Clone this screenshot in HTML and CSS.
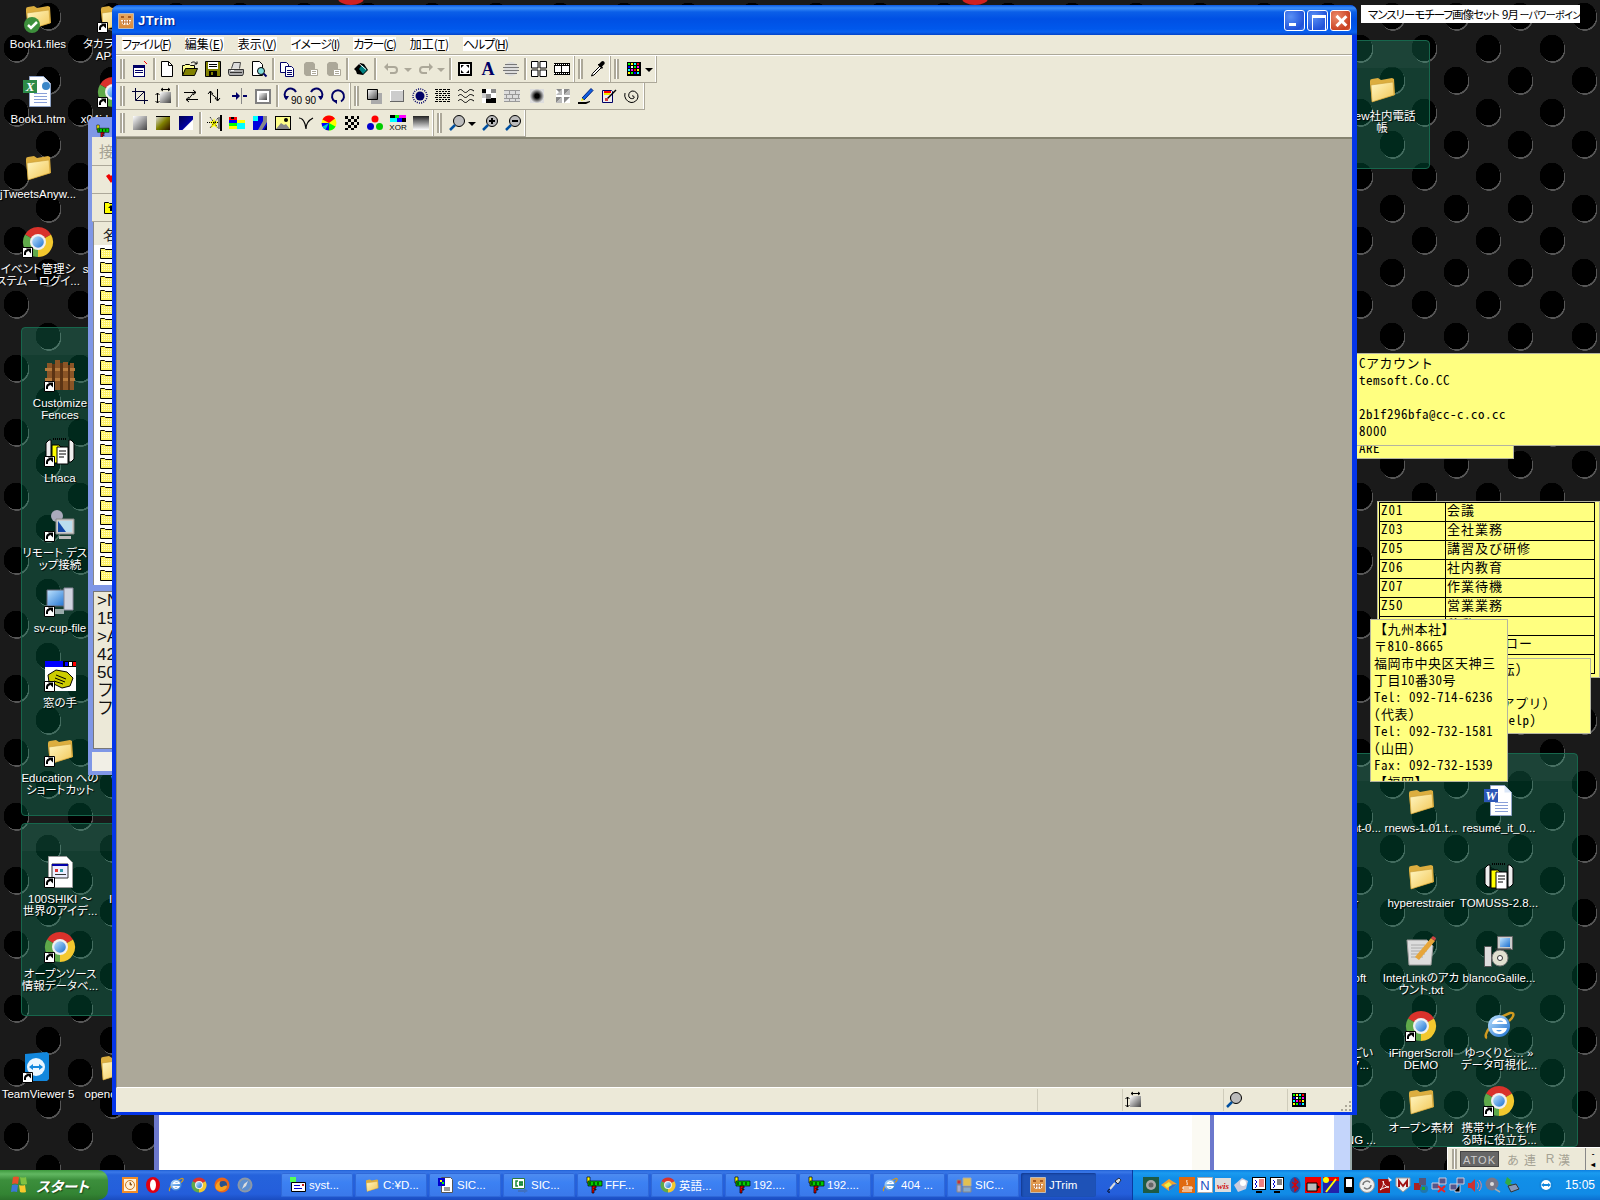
FILE: index.html
```html
<!DOCTYPE html>
<html lang="ja">
<head>
<meta charset="utf-8">
<title>JTrim</title>
<link rel="stylesheet" href="styles.css">
</head>
<body>
<svg class="defs" aria-hidden="true">
<defs>
<linearGradient id="gG" x1="0" y1="0" x2="1" y2="1"><stop offset="0" stop-color="#fff"/><stop offset="1" stop-color="#444"/></linearGradient>
<linearGradient id="gO" x1="0" y1="0" x2="1" y2="1"><stop offset="0" stop-color="#ddd"/><stop offset=".5" stop-color="#808000"/><stop offset="1" stop-color="#301000"/></linearGradient>
<linearGradient id="gN" x1="0" y1="0" x2="1" y2="1"><stop offset="0" stop-color="#000050"/><stop offset=".6" stop-color="#0000a0"/><stop offset=".65" stop-color="#fff"/></linearGradient>
<linearGradient id="gV" x1="0" y1="0" x2="0" y2="1"><stop offset="0" stop-color="#222"/><stop offset="1" stop-color="#fff"/></linearGradient>
<linearGradient id="gF" x1="0" y1="0" x2="1" y2="1"><stop offset="0" stop-color="#fff7c4"/><stop offset="1" stop-color="#f2c552"/></linearGradient>
<linearGradient id="gB" x1="0" y1="0" x2="1" y2="1"><stop offset="0" stop-color="#bfe4ff"/><stop offset="1" stop-color="#1b6fd0"/></linearGradient>
<linearGradient id="gS" x1="0" y1="0" x2="0" y2="1"><stop offset="0" stop-color="#e8a860"/><stop offset="1" stop-color="#d88838"/></linearGradient>
<radialGradient id="gD"><stop offset=".3" stop-color="#000"/><stop offset="1" stop-color="#ddd"/></radialGradient>

<g id="t-app"><path fill="#fff" d="M2 5h10v10H2z"/><path fill="#006" d="M1 4h12v3H1zM1 4h1v12H1zM12 4h1v12h-1zM1 15h12v1H1zM3 9h8v1H3zM3 11h8v1H3z"/><path fill="#f00" d="M12 0h1v1h1v1h1v1h-1V2h-1V1h-1z"/></g>
<g id="t-doc"><path fill="#fff" stroke="#000" d="M2.500.5h7l4 4v11h-11z"/><path fill="none" stroke="#000" d="M9.500.5v4h4"/></g>
<g id="t-open"><path fill="#ffff90" stroke="#000" d="M.5 14.500v-10h2l1-1h4l1 1h4v3h-8l-4 7z"/><path fill="#808000" stroke="#000" d="M.5 14.500l3-7h12l-3 7z"/><path fill="none" stroke="#000" d="M9 2c2-1.500 4-1.500 5.500 1M15 .5v2.500h-2.500"/></g>
<g id="t-save"><path fill="#808000" stroke="#000" d="M.5.5h15v15H.5z"/><path fill="#fff" d="M3 1h10v7H3z"/><path fill="#000" d="M4 3h8v1H4zM4 5h8v1H4zM4 10h8v5H4z"/><path fill="#808000" d="M6 11h2v3H6z"/></g>
<g id="t-print"><path fill="#ddd" stroke="#444" d="M3.500 7.500l2-6h7l-1 6"/><path fill="#aaa" stroke="#333" d="M.5 8.500h15v4l-1 2h-13l-1-2z"/><path fill="#333" d="M2 11h12v1H2z"/><path fill="#fff" d="M3 9h3v1H3z"/></g>
<g id="t-prev"><path fill="#fff" stroke="#000" d="M1.500.5h7l3 3v11h-10z"/><circle cx="10" cy="10" r="3.500" fill="#7fdcdc" stroke="#000"/><path stroke="#006" stroke-width="2" d="M12.500 12.500l3 3"/></g>
<g id="t-copy"><path fill="#fff" stroke="#006" d="M1.500 1.500h6l2 2v8h-8z"/><path fill="#fff" stroke="#006" d="M6.500 5.500h6l2 2v8h-8z"/><path stroke="#006" d="M8 9.500h5M8 11.500h5M8 13.500h5"/></g>
<g id="t-paste"><path fill="#aca899" d="M4 1h7l2 2v10l-2 2H4L2 13V3z"/><path fill="#fff" stroke="#aca899" d="M8.500 8.500h7v6h-7z"/><path stroke="#aca899" d="M10 10.500h4M10 12.500h4"/></g>
<g id="t-bucket"><path d="M1 8l6-6 4 1 4 6-5 5-6-1-1-3z"/><path fill="#008080" d="M9 4l5 5-4 4-4-5z"/><path stroke="#fff" d="M6 2.500l7 6"/></g>
<g id="t-undo"><path fill="none" stroke="#aca899" stroke-width="2" d="M3 6h8a3 3 0 0 1 0 6H7"/><path fill="#aca899" d="M5 2v8L1 6z"/></g>
<g id="t-redo"><path fill="none" stroke="#aca899" stroke-width="2" d="M13 6H5a3 3 0 0 0 0 6h4"/><path fill="#aca899" d="M11 2v8l4-4z"/></g>
<g id="t-fit"><path d="M1 1h14v14H1z"/><path fill="#fff" d="M3 3h10v10H3z"/><path d="M4 4h3L4 7zM12 4v3L9 4zM4 12V9l3 3zM12 12H9l3-3z"/></g>
<g id="t-a"><text x="8" y="14" text-anchor="middle" class="sv-serif" font-size="18" fill="#006">A</text></g>
<g id="t-emb"><circle cx="8" cy="8" r="7" fill="#ddd"/><path stroke="#777" d="M2 3.500h12M0 6.500h16M0 9.500h16M2 12.500h12"/></g>
<g id="t-grid"><path fill="#fff" stroke="#000" d="M.5.5h6.500v6.500H.5zM9 .5h6.500v6.500H9zM.5 9h6.500v6.500H.5zM9 9h6.500v6.500H9z"/></g>
<g id="t-film"><path d="M0 2h16v12H0z"/><path fill="#fff" d="M1 5h6v6H1zM8 5h7v6H8z"/><path stroke="#fff" stroke-dasharray="1 1" d="M0 3.500h16M0 12.500h16"/></g>
<g id="t-drop"><path fill="#fff" stroke="#000" d="M2.500 12.500l-1 2.500 2.500-1 7.500-7.500-1.500-1.500z"/><path d="M8 4l4 4 1-1.500-1-1 2.500-2.500a2 2 0 0 0-3-2.500L9 3 8 3z"/></g>
<g id="t-pal"><path d="M1 1h14v14H1z"/><path fill="#0f0" d="M2 2h2v2H2zM8 5h2v2H8zM5 11h2v2H5z"/><path fill="#ff0" d="M5 2h2v2H5zM11 8h2v2h-2zM2 11h2v2H2z"/><path fill="#0ff" d="M8 2h2v2H8zM2 8h2v2H2zM11 11h2v2h-2z"/><path fill="#00f" d="M2 5h2v2H2zM8 11h2v2H8z"/><path fill="#f0f" d="M11 5h2v2h-2zM5 8h2v2H5z"/><path fill="#f00" d="M11 2h2v2h-2zM8 8h2v2H8z"/><path fill="#fff" d="M5 5h2v2H5z"/></g>
<g id="t-crop"><path fill="none" stroke="#003" d="M3.500 0v12.500H16M0 3.500h12.500V16M4 12L12 4"/></g>
<g id="t-size"><path fill="url(#gG)" d="M5 4h11v11H5z"/><path fill="none" stroke="#000" d="M6 1.500h9M6 1.500l2-1.500M6 1.500l2 1.500M15 1.500l-2-1.500M15 1.500l-2 1.500M2.500 5v10M2.500 5l-2 2M2.500 5l2 2M2.500 15l-2-2M2.500 15l2-2"/></g>
<g id="t-swh"><path fill="none" stroke="#000" d="M1 4.500h12M10 2l3 2.500L10 7M15 11.500H3M6 9l-3 2.500L6 14M12 3L4 13"/></g>
<g id="t-swv"><path fill="none" stroke="#000" d="M4.500 15V3M2 6l2.500-3L7 6M11.500 1v12M9 10l2.500 3 2.500-3M3 4l10 8"/></g>
<g id="t-mir"><path fill="#006" d="M0 7h4V4l4 4-4 4V9H0zM11 7h4v2h-4z"/><path stroke="#888" d="M9.500 0v16"/></g>
<g id="t-frm"><path fill="#fff" stroke="#808080" stroke-width="2" d="M1 2h14v13H1z"/><path fill="url(#gG)" d="M4 5h8v7H4z"/></g>
<g id="t-r1"><path fill="none" stroke="#006" stroke-width="2" d="M2.500 11A6 6 0 1 1 12 4"/><path fill="#006" d="M0 8h5l-2.500 4z"/><text x="7" y="16" class="sv-sans" font-size="10" fill="#000">90</text></g>
<g id="t-r2"><path fill="none" stroke="#006" stroke-width="2" d="M13.500 11A6 6 0 1 0 4 4"/><path fill="#006" d="M16 8h-5l2.500 4z"/><text x="-2" y="16" class="sv-sans" font-size="10" fill="#000">90</text></g>
<g id="t-r3"><path fill="none" stroke="#006" stroke-width="2" d="M5 13.500a6 6 0 1 1 6 0"/><path fill="#006" d="M2 12h5v4z"/></g>
<g id="t-shd"><path fill="#aaa" d="M5 5h11v11H5z"/><path fill="url(#gG)" stroke="#000" d="M1.500 1.500h10v10h-10z"/></g>
<g id="t-btn"><path fill="#ccc" d="M1 2h14v12H1z"/><path fill="#fff" d="M1 2h14v1H2v11H1z"/><path fill="#666" d="M15 2v12H1v-1h13V2z"/></g>
<g id="t-sun"><circle cx="8" cy="8" r="4.500" fill="#006"/><circle cx="8" cy="8" r="7" fill="none" stroke="#006" stroke-width="1.500" stroke-dasharray="1 1.200"/></g>
<g id="t-mos"><path stroke="#000" stroke-dasharray="3 1" d="M0 1.500h16M0 5.500h16M0 9.500h16M0 13.500h16"/><path stroke="#000" stroke-dasharray="2 1" d="M1 3.500h15M1 7.500h15M1 11.500h15"/></g>
<g id="t-wav"><path fill="none" stroke="#000" d="M0 3c2-2 3-2 5 0s3 2 5 0 3-2 6 0M0 8c2-2 3-2 5 0s3 2 5 0 3-2 6 0M0 13c2-2 3-2 5 0s3 2 5 0 3-2 6 0"/></g>
<g id="t-chk"><path fill="#888" d="M1 1h14v14H1z"/><path d="M1 1h4v4H1zM10 10h5v5h-5zM5 11h5v4H5z"/><path fill="#fff" d="M5 1h5v5H5zM10 5h5v5h-5zM1 10h4v5H1z"/><path fill="#ccc" d="M1 5h4v5H1z"/></g>
<g id="t-brk"><path fill="#ddd" d="M0 2h16v12H0z"/><path stroke="#999" d="M0 2.500h16M0 6.500h16M0 10.500h16M0 13.500h16M5.500 3v3M11.500 3v3M2.500 7v3M8.500 7v3M14.500 7v3M5.500 11v2M11.500 11v2"/></g>
<g id="t-drk"><path fill="url(#gD)" d="M1 1h14v14H1z"/></g>
<g id="t-tile"><path fill="#fff" d="M1 1h14v14H1z"/><path fill="#888" d="M1 1h6v6zM9 1h6L9 7zM1 9h6l-6 6zM9 9h6l-6 6z"/><path fill="#bbb" d="M7 1v6H1zM15 1v6H9zM7 9v6H1z"/></g>
<g id="t-pen"><path fill="#1060e0" stroke="#002080" d="M4 10L13 .5l2 2L6 12z"/><path fill="#ee0" d="M4 10l2 2-3 1z"/><path fill="#000" d="M0 14h8l4-1v1l-4 2H0z"/></g>
<g id="t-cup"><path fill="#eee" stroke="#006" d="M1.500 2.500h9l1 1v11h-10z"/><path fill="#f00" d="M3 3h7v2H3z"/><path fill="#ee0" d="M3 5h6v2H3z"/><path fill="none" stroke="#000" stroke-width="1.500" d="M5 12L15 2"/><path fill="#c44" d="M4 10h3v3H4z"/></g>
<g id="t-spi"><path fill="none" stroke="#000" d="M8 8a1.500 1.500 0 0 1 2 2 3.500 3.500 0 0 1-5-1 4.500 4.500 0 0 1 3-6 5.500 5.500 0 0 1 6 6 6.500 6.500 0 0 1-7 5.500A7.500 7.500 0 0 1 1 5"/></g>
<g id="t-g1"><path fill="url(#gG)" d="M1 1h14v14H1z"/></g>
<g id="t-g2"><path fill="url(#gO)" d="M1 1h14v14H1z"/><path stroke="#000" d="M1 1.500h14"/></g>
<g id="t-g3"><path fill="url(#gN)" d="M1 1h14v14H1z"/></g>
<g id="t-spk"><path fill="#ff0" d="M8 3l1 3 4 1-3 2 1 4-3-2-3 2 1-4-3-2 4-1z"/><path stroke="#000" stroke-dasharray="1 1" d="M4 2l8 11M12 3L4 13M1 7.500h13"/><path fill="#888" d="M12 2h2v12h-2z"/><path d="M14 0h2v16h-2z"/></g>
<g id="t-bar"><path fill="#f00" d="M0 2h8v3H0z"/><path d="M2 2h3v2H2z"/><path fill="#00f" d="M0 5h8v3H0z"/><path fill="#0f0" d="M0 8h8v3H0z"/><path fill="#ff0" d="M8 5h8v3H8zM0 11h8v3H0z"/><path fill="#0ff" d="M8 8h8v3H8zM8 11h8v3H8z"/></g>
<g id="t-blu"><path fill="#00d" d="M1 1h14v14H1z"/><path fill="#0ff" d="M1 1h5v5H1z"/><path fill="#888" d="M11 1l4 0v6l-5 8h-4l5-9z"/><path fill="#003" d="M12 15h3v-5z"/></g>
<g id="t-pic"><path d="M0 1h16v14H0z"/><path fill="#ff8" d="M1 2h14v12H1z"/><path fill="#888" d="M1 14l5-6 3 2 2-1 4 5z"/><circle cx="11" cy="5" r="2"/></g>
<g id="t-gam"><path fill="none" stroke="#000" stroke-width="1.200" d="M1 3c3 0 5 3 6 6l1 5M8 14c0-5 3-9 7-11"/></g>
<g id="t-whl"><circle cx="8" cy="8" r="7.500" fill="#ff0"/><path fill="#f00" d="M8 8V.5A7.500 7.500 0 0 0 1.500 4.500zM8 8V.5A7.500 7.500 0 0 1 14 3.500z"/><path fill="#00f" d="M8 8H.5a7.500 7.500 0 0 0 7.500 7.500z"/><path fill="#0f0" d="M8 8v7.500a7.500 7.500 0 0 0 6.500-4z"/><path fill="#0cc" d="M8 8l-6.500 3.500a7.500 7.500 0 0 0 3 3z"/></g>
<g id="t-chx"><path d="M1 1h3v3H1zM7 1h3v3H7zM13 1h2v3h-2zM4 4h3v3H4zM10 4h3v3h-3zM1 7h3v3H1zM7 7h3v3H7zM13 7h2v3h-2zM4 10h3v3H4zM10 10h3v3h-3zM1 13h3v2H1zM7 13h3v2H7z"/></g>
<g id="t-rgb"><circle cx="8" cy="4" r="3.500" fill="#f00"/><circle cx="3.500" cy="11.500" r="3.500" fill="#00c"/><circle cx="12.500" cy="11.500" r="3.500" fill="#0c0"/></g>
<g id="t-xor"><path d="M0 0h5v3H0z"/><path fill="#0f0" d="M5 0h4v3H5z"/><path fill="#f0f" d="M9 0h7v3H9z"/><path fill="#0ff" d="M0 3h7v4H0z"/><path fill="#00f" d="M7 3h5v4H7z"/><path d="M12 3h4v4h-4z"/><text x="8" y="15" text-anchor="middle" class="sv-sans" font-size="8" fill="#000">XOR</text></g>
<g id="t-gbr"><path fill="url(#gV)" d="M0 1h16v14H0z"/></g>
<g id="t-mag"><circle cx="10" cy="6" r="5.500" fill="#bbb" stroke="#000"/><path stroke="#0050a0" stroke-width="2.500" d="M6 10l-5 5"/></g>
<g id="t-zi"><circle cx="10" cy="6" r="5.500" fill="#bbb" stroke="#000"/><path stroke="#0050a0" stroke-width="2.500" d="M6 10l-5 5"/><path stroke="#000" stroke-width="2" d="M7 6h6M10 3v6"/></g>
<g id="t-zo"><circle cx="10" cy="6" r="5.500" fill="#bbb" stroke="#000"/><path stroke="#0050a0" stroke-width="2.500" d="M6 10l-5 5"/><path stroke="#000" stroke-width="2" d="M7 6h6"/></g>

<g id="b-folder"><path fill="#dcae3f" d="M4 11V8q0-2 2-2l6-1 3 2 11-2 2 1 1 16-23 7z"/><path fill="url(#gF)" stroke="#c89a30" stroke-width=".6" d="M5 12l22-3 1 13-22 7z"/></g>
<g id="b-sc"><path fill="#fff" stroke="#000" d="M.5 21.500h10v10H.5z"/><path fill="none" stroke="#000" stroke-width="2" d="M3 29v-2q0-2 3-3"/><path d="M4 22.500h5v5z"/></g>
<g id="b-chrome"><path fill="#d9322b" d="M16 16L3 8.500A15 15 0 0 1 29 8.500z"/><path fill="#f3c82e" d="M16 16L29 8.500A15 15 0 0 1 16 31z"/><path fill="#5fa94a" d="M16 16L16 31A15 15 0 0 1 3 8.500z"/><circle cx="16" cy="16" r="8" fill="#f0f0f0"/><circle cx="16" cy="16" r="5.800" fill="url(#gB)"/></g>
<g id="b-ie"><path fill="none" stroke="#d09a20" stroke-width="2.500" d="M4 28c-5-2 5-18 23-25 6-1 3 5-1 8"/><circle cx="16" cy="16" r="11" fill="url(#gB)"/><path fill="#fff" d="M9 14h15c0-4-3-6-7-6s-8 3-8 6zm5-2c0-2 6-2 6 0z"/><path fill="#fff" d="M9 18h15c-1 4-4 6-8 6s-7-3-7-6zm4 2c2 2 4 2 6 0z"/></g>
<g id="b-pagelines"><path fill="#fff" stroke="#90a4c8" d="M7.500.5h14l7 7v23h-21z"/><path fill="#dbe7f8" d="M21.500.5v7h7z"/><path stroke="#8aa0d8" d="M12 17.500h13M12 20.500h13M12 23.500h13M12 26.500h13"/></g>
<g id="b-word"><use href="#b-pagelines"/><path fill="#2b56b8" d="M1 4h14v13H1z"/><text x="8" y="15" text-anchor="middle" class="sv-serif-i" font-size="13" fill="#fff">W</text></g>
<g id="b-excel"><use href="#b-pagelines"/><path fill="#2c8a47" d="M1 4h14v13H1z"/><text x="8" y="15" text-anchor="middle" class="sv-serif-i" font-size="13" fill="#fff">X</text><circle cx="24" cy="10" r="4" fill="#3a86c8"/></g>
<g id="b-text"><path fill="#ddd" stroke="#999" d="M2 5h20l6 6-2 19H4z"/><path stroke="#aaa" d="M6 10h14M6 13h12M6 16h16M6 19h14M6 22h12"/><path fill="#e6a53a" d="M10 22L26 3l4 3-16 19z"/><path fill="#c44" d="M26 3l4 3 1-3-3-2z"/></g>
<g id="b-setup"><path fill="#ccc" stroke="#666" d="M14.500 1.500h15v13h-15z"/><path fill="url(#gB)" d="M17 3h10v9H17z"/><path fill="#ddd" stroke="#555" d="M1.500 11.500h7v20h-7z"/><circle cx="17" cy="23" r="8" fill="#e0e0d0" stroke="#777"/><circle cx="17" cy="23" r="2.500" fill="#fff" stroke="#333"/><path stroke="#333" d="M12 14h16"/></g>
<g id="b-lhaca"><path fill="#eee" stroke="#000" d="M2 8l3-3h2v22H5l-3-3zM30 8l-3-3h-2v22h2l3-3z"/><path stroke="#000" stroke-width="2" stroke-dasharray="1 1" d="M9 4h14"/><path fill="#ff0" stroke="#000" d="M8 10h7l2 2h2v16H8z"/><path fill="#fff" stroke="#000" d="M13 12h11v17H13z"/><path stroke="#000" d="M15 16h7M15 19h7M15 22h5"/></g>
<g id="b-fence"><path fill="#8b5526" d="M3 3h5v27H3zM11 0h5v30h-5zM19 2h5v28h-5zM26 3h4v27h-4z"/><path fill="#b67a3c" d="M1 8h30v3H1zM1 18h30v3H1z"/><path fill="#5c3414" d="M8 4h3v26H8zM16 3h3v27h-3zM24 5h2v25h-2z"/></g>
<g id="b-remote"><circle cx="13" cy="6" r="6" fill="#aab"/><path fill="#ccc" stroke="#888" d="M12 9h18v15H12z"/><path fill="#1246a8" d="M14 11h14v11H14z"/><path fill="#bde" d="M14 11l8 11h6V11z"/><path fill="#bbb" d="M15 26h12v3H15z"/></g>
<g id="b-pc"><path fill="url(#gB)" stroke="#667" d="M3 5h19v16H3z"/><path fill="#d0d4e0" stroke="#889" d="M20 3h9v22h-9z"/><path fill="#9aa" d="M6 24h14v5H6z"/></g>
<g id="b-hand"><path fill="#fff" d="M1 1h31v30H1z"/><path fill="#00f" d="M1 1h18v6H1z"/><path d="M19 1h13v6H19z"/><path fill="#00f" d="M21 2h3v4h-3z"/><path fill="#fff" d="M25 2h3v4h-3z"/><path fill="#f00" d="M29 2h3v4h-3z"/><path fill="#cc0" stroke="#000" d="M4 15l8-5 11 2 6 6-3 8-8 2-6-3-7-3z"/><path stroke="#000" d="M12 15l10 4M11 18l10 4M10 21l9 3"/></g>
<g id="b-tv"><path fill="#1287dd" d="M3 3l22-2 2 2v25l-2 2H5l-2-2z"/><circle cx="14" cy="16" r="9" fill="#eaf6ff"/><path fill="#1287dd" d="M7 16l4-3v2h6v-2l4 3-4 3v-2h-6v2z"/></g>
<g id="b-webdoc"><path fill="#fff" stroke="#999" d="M4.500.5h18l6 6v25h-24z"/><path fill="#eef" stroke="#333" d="M8 8h16v14H8z"/><path fill="#00a" d="M8 8h16v2H8z"/><path fill="#d33" d="M11 13h3v3h-3z"/><path fill="#39a" d="M16 13h3v3h-3z"/><path fill="#333" d="M11 18h11v1H11z"/></g>

<g id="ftp"><path fill="#ff0" stroke="#000" stroke-width=".7" d="M1 0h3v6H1z"/><path fill="#0c0" stroke="#000" stroke-width=".7" d="M2 4h14v5H2z"/><path stroke="#000" d="M4 5v3M8 5v3M12 5v3"/><path fill="#e00" stroke="#000" stroke-width=".7" d="M6 9h4v2H8v1h2v1H8v3H6z"/></g>
<g id="q-clock"><path fill="#f08c28" d="M0 0h16v16H0z"/><path fill="#fff2d8" d="M2 2h12v12H2z"/><circle cx="8" cy="8" r="4.500" fill="none" stroke="#c87820"/><path stroke="#c87820" d="M8 5v3h2"/></g>
<g id="q-opera"><ellipse cx="8" cy="8" rx="7" ry="8" fill="#e00012"/><ellipse cx="8" cy="8" rx="3" ry="5.500" fill="#fff"/></g>
<g id="q-ff"><circle cx="8" cy="8" r="7.500" fill="#e9661a"/><circle cx="9" cy="8" r="4" fill="#27518c"/><path fill="#f6a21f" d="M2 12c3 3 9 3 11-2 0-3-3-1-5 0-2 0-3-2-2-6-3 1-5 4-4 8z"/></g>
<g id="q-saf"><circle cx="8" cy="8" r="7.500" fill="#8a97a8"/><circle cx="8" cy="8" r="5.500" fill="#5d8fd0"/><path fill="#ddd" d="M11 4l-2 5-4 3 2-5z"/></g>
<g id="q-mail"><path fill="#fff" stroke="#000" d="M1.500 5.500h14v9h-14z"/><path fill="#00c" d="M4 8h6v1H4zM4 11h8v1H4z"/><path fill="#c22" d="M12 7h2v2h-2z"/><path fill="#5f5" d="M0 0h6v5H0z"/></g>
<g id="q-sheet"><path fill="#fff" stroke="#555" d="M3.500.5h9l2 2v13h-11z"/><path fill="#00c" d="M0 1h7v8H0z"/><path fill="#ff0" d="M2 3h2v2H2z"/><path fill="#0f0" d="M4 5h2v2H4z"/><path stroke="#333" d="M6 11h6M6 13h6"/></g>
<g id="q-cs"><path fill="#fff" stroke="#2c7a3a" d="M.5 1.500h12v10H.5z"/><path fill="none" stroke="#1a8a3a" stroke-width="1.500" d="M6 4H4v5h2M8 4v5M10 4v5M7 5.500h4M7 7.500h4"/><path fill="#4070c0" d="M6 13h6v-2l4 3-4 2v-1H6z"/></g>
<g id="q-app"><path fill="#e2c050" stroke="#aaa" d="M7 1h8v8H7z"/><path fill="#c33" stroke="#888" d="M1 3h4v4H1z"/><path fill="#aac" stroke="#888" d="M1 8h4v7H1z"/><path fill="#8ac" stroke="#888" d="M7 10h8v5H7z"/></g>
<g id="q-smile"><path fill="url(#gS)" stroke="#bbb" d="M.5.5h15v15H.5z"/><path fill="#fff" d="M3 7h10q0 5-5 5T3 7z"/><path stroke="#c07030" d="M3 9h10M5.500 7v4M8 7v5M10.500 7v4"/><path fill="#a85a20" d="M3 3h3v2H3zM10 3h3v2h-3z"/></g>
<g id="q-mic"><path fill="#ddd" stroke="#000" stroke-width=".7" d="M9 4l4-3 2 2-3 4z"/><path stroke="#ddd" stroke-width="2" d="M9 6l-5 6"/><path fill="none" stroke="#000" d="M4 12c-3 1-3 4 0 3"/></g>

<g id="y-cam"><path fill="#1d5a44" d="M0 0h16v16H0z"/><circle cx="8" cy="8" r="5" fill="#aaa"/><circle cx="8" cy="8" r="2.500" fill="#666"/></g>
<g id="y-col"><path fill="#f0a030" d="M0 8l8-6 8 5-8 7z"/><path fill="#3070d0" d="M8 8l8-1-8 7z"/><path fill="#ee4" d="M3 8l5-3 3 3-5 3z"/></g>
<g id="y-java"><path fill="#e06a10" d="M0 0h16v16H0z"/><path fill="none" stroke="#fff" d="M4 10h7v2H4zM8 3c-1 2 1 3 0 5M11 10h2v2h-2M3 14h10"/></g>
<g id="y-n"><path fill="#fff" stroke="#aaa" d="M.5.5h15v15H.5z"/><text x="8" y="13" text-anchor="middle" class="sv-sans" font-size="13" fill="#2050c0">N</text></g>
<g id="y-wis"><path fill="#ddd" d="M0 1h16v14H0z"/><text x="8" y="12" text-anchor="middle" class="sv-serif-i" font-size="9" fill="#d01010">wis</text></g>
<g id="y-ball"><path fill="#ccd" d="M1 8l8-7 6 3-2 8-8 3z"/><circle cx="10" cy="6" r="3" fill="#fff"/></g>
<g id="y-m1"><path d="M1 0h14v13H1zM5 14h6v2H5z"/><path fill="#fff" d="M2 1h12v11H2z"/><path fill="none" stroke="#00c" d="M4 3l2 2-2 2 2 2-2 2"/><path stroke="#d00" d="M8 3h5M8 5h5M8 7h5M8 9h5"/></g>
<g id="y-m2"><path d="M1 0h14v13H1zM5 14h6v2H5z"/><path fill="#fff" d="M2 1h12v11H2z"/><path fill="none" stroke="#00c" d="M4 3l2 2-2 2 2 2-2 2"/><path stroke="#000" d="M8 3h5M8 5h5M8 7h5"/></g>
<g id="y-bt"><ellipse cx="8" cy="8" rx="5.500" ry="8" fill="#1c4fa8"/><path fill="none" stroke="#d00" stroke-width="1.200" d="M5 5l6 6-3 3V2l3 3-6 6"/></g>
<g id="y-r1"><path fill="#e00" d="M0 0h16v16H0z"/><path fill="#bbb" stroke="#000" d="M2 6h10v8H2z"/><path d="M12 8l3 2-3 2z"/></g>
<g id="y-r2"><path fill="#e00" d="M0 0h16v16H0z"/><path fill="#22a" d="M0 4h16v12H0z"/><circle cx="3" cy="3" r="3" fill="#ff0"/><path stroke="#ff0" stroke-width="2" d="M3 15L13 2"/></g>
<g id="y-ph"><path d="M4 0h8l1 1v14l-1 1H4l-1-1V1z"/><path fill="#fff" d="M5 2h6v8H5z"/></g>
<g id="y-sy"><circle cx="8" cy="8" r="7.500" fill="#eee" stroke="#999"/><path fill="none" stroke="#777" stroke-width="1.500" d="M4 8a4 4 0 0 1 7-2.500M12 8a4 4 0 0 1-7 2.500"/></g>
<g id="y-ac"><path fill="#a01010" d="M1 2h12v14H1z"/><path fill="none" stroke="#fff" d="M3 13c3-3 4-6 3-9 1 4 3 6 6 6-3 0-6 1-9 3z"/><path fill="#eee" d="M11 0l4 3-3 2z"/></g>
<g id="y-mc"><path fill="#eee" stroke="#999" d="M1 1h14v8l-7 6-7-6z"/><path fill="none" stroke="#a01010" stroke-width="2" d="M4 10V4l4 5 4-5v6"/></g>
<g id="y-n1"><path fill="#a22" d="M1 6h7v7H1z"/><path fill="#557" d="M6 1h7v7H6z"/><circle cx="11" cy="12" r="4" fill="#27a"/><path fill="#2a2" d="M9 10h3v3H9z"/></g>
<g id="y-n2"><path fill="#558" stroke="#ccd" d="M1 6h7v6H1zM8 1h7v6H8z"/><path stroke="#e22" stroke-width="2" d="M7 9l7 6M14 9l-7 6"/></g>
<g id="y-n3"><path fill="#558" stroke="#ccd" d="M1 7h7v6H1zM8 1h7v6H8z"/><path stroke="#ccd" d="M6 14v1h5V8"/></g>
<g id="y-sp"><path fill="#c33" d="M1 6h3l4-4v13l-4-4H1z"/><path fill="none" stroke="#e88" d="M10 5c2 2 2 5 0 7M12 3c3 3 3 8 0 11"/></g>
<g id="y-dc"><circle cx="7" cy="7" r="6.500" fill="#778"/><circle cx="7" cy="7" r="2" fill="#ddd"/><path stroke="#aaa" stroke-width="1.500" d="M10 12l5 3"/></g>
<g id="y-gr"><path fill="#3a4" d="M4 0l5 4-2 2 3 2-3 2-5-4z"/><path fill="#8898b8" stroke="#333" d="M5 9l8-2 3 5-8 3z"/></g>
<g id="y-tv"><circle cx="8" cy="8" r="7" fill="#1287dd"/><circle cx="8" cy="8" r="5" fill="#fff"/><path fill="#1287dd" d="M3 8l3-2v1h4V6l3 2-3 2V9H6v1z"/></g>
</defs>
</svg>

<main class="desk">
<div class="canvas">
  <span class="peek peek-a"></span>
  <span class="peek peek-b"></span>

  <section class="fence fence-tr"></section>
  <section class="fence fence-l1"></section>
  <section class="fence fence-l2"></section>
  <section class="fence fence-br"></section>

  <div class="col col-a">
    <div class="ic"><svg class="big" viewBox="0 0 32 32"><use href="#b-folder"/><circle cx="10" cy="24" r="8" fill="#3d8f3c"/><path fill="none" stroke="#fff" stroke-width="2.500" d="M6 24l3 3 6-6"/></svg><span class="lb">Book1.files</span></div>
    <div class="ic"><svg class="big" viewBox="0 0 32 32"><use href="#b-excel"/></svg><span class="lb">Book1.htm</span></div>
    <div class="ic"><svg class="big" viewBox="0 0 32 32"><use href="#b-folder"/></svg><span class="lb">jTweetsAnyw...</span></div>
    <div class="ic"><svg class="big" viewBox="0 0 32 32"><use href="#b-chrome"/><use href="#b-sc"/></svg><span class="lb">イベント管理シ<br>ステムーログイ...</span></div>
  </div>
  <div class="col col-b">
    <div class="ic"><svg class="big" viewBox="0 0 32 32"><use href="#b-folder"/><use href="#b-sc"/></svg><span class="lb">タカラトミー<br>APS帖</span></div>
    <div class="ic"><svg class="big" viewBox="0 0 32 32"><use href="#b-chrome"/><use href="#b-sc"/></svg><span class="lb">x04ideas_ok</span></div>
    <div class="ic"><svg class="big" viewBox="0 0 32 32"><use href="#b-folder"/></svg><span class="lb">サーバ<br>Server...</span></div>
    <div class="ic"><svg class="big" viewBox="0 0 32 32"><use href="#b-folder"/></svg><span class="lb">sourceforge</span></div>
  </div>
  <div class="col col-tv">
    <div class="ic"><svg class="big" viewBox="0 0 32 32"><use href="#b-tv"/><use href="#b-sc"/></svg><span class="lb">TeamViewer 5</span></div>
  </div>
  <div class="col col-tv2">
    <div class="ic"><svg class="big" viewBox="0 0 32 32"><use href="#b-folder"/></svg><span class="lb">opencv-2.1</span></div>
  </div>

  <div class="col col-f1">
    <div class="ic"><svg class="big" viewBox="0 0 32 32"><use href="#b-fence"/><use href="#b-sc"/></svg><span class="lb">Customize<br>Fences</span></div>
    <div class="ic"><svg class="big" viewBox="0 0 32 32"><use href="#b-lhaca"/><use href="#b-sc"/></svg><span class="lb">Lhaca</span></div>
    <div class="ic"><svg class="big" viewBox="0 0 32 32"><use href="#b-remote"/><use href="#b-sc"/></svg><span class="lb">リモート デスク<br>ップ接続</span></div>
    <div class="ic"><svg class="big" viewBox="0 0 32 32"><use href="#b-pc"/><use href="#b-sc"/></svg><span class="lb">sv-cup-file</span></div>
    <div class="ic"><svg class="big" viewBox="0 0 32 32"><use href="#b-hand"/><use href="#b-sc"/></svg><span class="lb">窓の手</span></div>
    <div class="ic"><svg class="big" viewBox="0 0 32 32"><use href="#b-folder"/><use href="#b-sc"/></svg><span class="lb">Education への<br>ショートカット</span></div>
  </div>
  <div class="col col-f1b">
    <div class="ic ic-empty"></div><div class="ic ic-empty"></div><div class="ic ic-empty"></div><div class="ic ic-empty"></div><div class="ic ic-empty"></div>
    <div class="ic"><svg class="big" viewBox="0 0 32 32"><use href="#b-folder"/></svg><span class="lb">wordpress<br>へのリンク</span></div>
  </div>
  <div class="col col-f2">
    <div class="ic"><svg class="big" viewBox="0 0 32 32"><use href="#b-webdoc"/><use href="#b-sc"/></svg><span class="lb">100SHIKI ～<br>世界のアイデ...</span></div>
    <div class="ic"><svg class="big" viewBox="0 0 32 32"><use href="#b-chrome"/><use href="#b-sc"/></svg><span class="lb">オープンソース<br>情報データベ...</span></div>
  </div>
  <div class="col col-f2b">
    <div class="ic"><svg class="big" viewBox="0 0 32 32"><use href="#b-webdoc"/></svg><span class="lb">IDEA*IDEA<br>百式さん</span></div>
    <div class="ic"><svg class="big" viewBox="0 0 32 32"><use href="#b-chrome"/></svg><span class="lb">Linuxの<br>ITmedia</span></div>
  </div>

  <div class="col col-tr">
    <div class="ic"><svg class="big" viewBox="0 0 32 32"><use href="#b-folder"/></svg><span class="lb">new社内電話<br>帳</span></div>
  </div>
  <div class="col col-r0">
    <div class="ic"><span class="gap32"></span><span class="lb">tokyotyrant-0...</span></div>
    <div class="ic"><span class="gap32"></span><span class="lb">Senar</span></div>
    <div class="ic"><span class="gap32"></span><span class="lb">Microsoft</span></div>
    <div class="ic"><svg class="big" viewBox="0 0 32 32"><use href="#b-folder"/></svg><span class="lb">こりゃすごい<br>テスト57...</span></div>
    <div class="ic"><svg class="big" viewBox="0 0 32 32"><use href="#b-folder"/></svg><span class="lb">-<br>IMG_PNG ...</span></div>
  </div>
  <div class="col col-r1">
    <div class="ic"><svg class="big" viewBox="0 0 32 32"><use href="#b-folder"/></svg><span class="lb">rnews-1.01.t...</span></div>
    <div class="ic"><svg class="big" viewBox="0 0 32 32"><use href="#b-folder"/></svg><span class="lb">hyperestraier</span></div>
    <div class="ic"><svg class="big" viewBox="0 0 32 32"><use href="#b-text"/></svg><span class="lb">InterLinkのアカ<br>ウント.txt</span></div>
    <div class="ic"><svg class="big" viewBox="0 0 32 32"><use href="#b-chrome"/><use href="#b-sc"/></svg><span class="lb">iFingerScroll<br>DEMO</span></div>
    <div class="ic"><svg class="big" viewBox="0 0 32 32"><use href="#b-folder"/></svg><span class="lb">オープン素材</span></div>
  </div>
  <div class="col col-r2">
    <div class="ic"><svg class="big" viewBox="0 0 32 32"><use href="#b-word"/></svg><span class="lb">resume_it_0...</span></div>
    <div class="ic"><svg class="big" viewBox="0 0 32 32"><use href="#b-lhaca"/></svg><span class="lb">TOMUSS-2.8...</span></div>
    <div class="ic"><svg class="big" viewBox="0 0 32 32"><use href="#b-setup"/></svg><span class="lb">blancoGalile...</span></div>
    <div class="ic"><svg class="big" viewBox="0 0 32 32"><use href="#b-ie"/></svg><span class="lb">ゆっくりと… »<br>データ可視化...</span></div>
    <div class="ic"><svg class="big" viewBox="0 0 32 32"><use href="#b-chrome"/><use href="#b-sc"/></svg><span class="lb">携帯サイトを作<br>る時に役立ち...</span></div>
  </div>

  <div class="title-note">マンスリーモチーフ画像セット &nbsp;9月 <small>ーパワーポイン</small></div>
  <div class="note note-are">ARE</div>
  <div class="note note-acc">Cアカウント
temsoft.Co.CC

2b1f296bfa@cc-c.co.cc
8000</div>
  <div class="note note-tbl"><table class="codes">
      <tr><td class="c1">Z01</td><td>会議</td></tr>
      <tr><td class="c1">Z03</td><td>全社業務</td></tr>
      <tr><td class="c1">Z05</td><td>講習及び研修</td></tr>
      <tr><td class="c1">Z06</td><td>社内教育</td></tr>
      <tr><td class="c1">Z07</td><td>作業待機</td></tr>
      <tr><td class="c1">Z50</td><td>営業業務</td></tr>
      <tr><td class="c1">Z60</td><td>移動</td></tr>
      <tr><td class="c1">Z70</td><td>　　　　フォロー</td></tr>
      <tr><td class="c1">Z80</td><td>&nbsp;</td></tr>
    </table></div>
  <div class="note note-mid">（画面回転）

（携帯用アプリ）
（タスクHelp）</div>
  <div class="note note-tip">【九州本社】
〒810-8665
福岡市中央区天神三
丁目10番30号
Tel: 092-714-6236
（代表）
Tel: 092-732-1581
（山田）
Fax: 092-732-1539
【福岡】</div>

  <div class="atok">
    <span class="grip atok-grip"></span>
    <span class="atok-name">ATOK</span>
    <span class="atok-ch">あ</span><span class="atok-ch">連</span><span class="atok-ch atok-r">R</span><span class="atok-ch">漢</span>
    <span class="atok-side"><b>-</b><b>◂</b></span>
  </div>

  <div class="under">
    <div class="under-main"></div>
    <div class="under-cream"></div>
    <div class="under-line"></div>
    <div class="under-right"></div>
    <div class="under-scroll"></div>
  </div>

  <section class="ftp">
    <div class="ftp-title"><svg class="i" viewBox="0 0 16 16"><use href="#ftp"/></svg></div>
    <div class="ftp-menu">接続</div>
    <div class="ftp-bar"><svg class="ftp-heart" viewBox="0 0 10 10"><path fill="#e00" d="M0 3l3-2 2 2 2-2 3 2-5 7z"/></svg></div>
    <div class="ftp-bar"><svg class="i ftp-up" viewBox="0 0 16 16"><path fill="#ff0" stroke="#000" d="M1.500 3.500h4l1 1h8v10h-13z"/><path d="M8 6l3 3H9v3H7V9H5z"/></svg></div>
    <div class="ftp-head">名前</div>
    <div class="ftp-list">
      <svg class="fd" viewBox="0 0 13 12"><use href="#fd"/></svg><svg class="fd" viewBox="0 0 13 12"><use href="#fd"/></svg><svg class="fd" viewBox="0 0 13 12"><use href="#fd"/></svg><svg class="fd" viewBox="0 0 13 12"><use href="#fd"/></svg><svg class="fd" viewBox="0 0 13 12"><use href="#fd"/></svg><svg class="fd" viewBox="0 0 13 12"><use href="#fd"/></svg>
      <svg class="fd" viewBox="0 0 13 12"><use href="#fd"/></svg><svg class="fd" viewBox="0 0 13 12"><use href="#fd"/></svg><svg class="fd" viewBox="0 0 13 12"><use href="#fd"/></svg><svg class="fd" viewBox="0 0 13 12"><use href="#fd"/></svg><svg class="fd" viewBox="0 0 13 12"><use href="#fd"/></svg><svg class="fd" viewBox="0 0 13 12"><use href="#fd"/></svg>
      <svg class="fd" viewBox="0 0 13 12"><use href="#fd"/></svg><svg class="fd" viewBox="0 0 13 12"><use href="#fd"/></svg><svg class="fd" viewBox="0 0 13 12"><use href="#fd"/></svg><svg class="fd" viewBox="0 0 13 12"><use href="#fd"/></svg><svg class="fd" viewBox="0 0 13 12"><use href="#fd"/></svg><svg class="fd" viewBox="0 0 13 12"><use href="#fd"/></svg>
      <svg class="fd" viewBox="0 0 13 12"><use href="#fd"/></svg><svg class="fd" viewBox="0 0 13 12"><use href="#fd"/></svg><svg class="fd" viewBox="0 0 13 12"><use href="#fd"/></svg><svg class="fd" viewBox="0 0 13 12"><use href="#fd"/></svg><svg class="fd" viewBox="0 0 13 12"><use href="#fd"/></svg><svg class="fd" viewBox="0 0 13 12"><use href="#fd"/></svg>
    </div>
    <div class="ftp-log">&gt;NOOP
150
&gt;ABOR
426
500
ファイル
ファイル</div>
    <div class="ftp-status"></div>
  </section>
  <svg class="defs" aria-hidden="true"><defs><g id="fd"><path fill="#fff468" stroke="#000" d="M.5 2.500v-1h4l1 1h7v9H.5z"/><path stroke="#fffbd0" stroke-dasharray="1 1" d="M2 4.500h10M2 6.500h10M2 8.500h10"/></g></defs></svg>

  <section class="jt">
    <header class="jt-title">
      <svg class="i" viewBox="0 0 16 16"><use href="#q-smile"/></svg>
      <span class="jt-name">JTrim</span>
      <span class="wb wb-min"></span><span class="wb wb-max"></span><span class="wb wb-close"></span>
    </header>
    <div class="jt-client">
      <nav class="menu">
        <span class="mi mi-k">ファイル(<u>F</u>)</span>
        <span class="mi">編集(<u>E</u>)</span>
        <span class="mi">表示(<u>V</u>)</span>
        <span class="mi mi-k">イメージ(<u>I</u>)</span>
        <span class="mi mi-k">カラー(<u>C</u>)</span>
        <span class="mi">加工(<u>T</u>)</span>
        <span class="mi mi-k">ヘルプ(<u>H</u>)</span>
      </nav>
      <div class="tbs">
        <div class="tb">
          <div class="seg seg-first"><span class="grip"></span>
            <span class="b"><svg class="i" viewBox="0 0 16 16"><use href="#t-app"/></svg></span>
            <span class="sep sep-n"></span>
            <span class="b"><svg class="i" viewBox="0 0 16 16"><use href="#t-doc"/></svg></span>
            <span class="b"><svg class="i" viewBox="0 0 16 16"><use href="#t-open"/></svg></span>
            <span class="b"><svg class="i" viewBox="0 0 16 16"><use href="#t-save"/></svg></span>
            <span class="b"><svg class="i" viewBox="0 0 16 16"><use href="#t-print"/></svg></span>
            <span class="b"><svg class="i" viewBox="0 0 16 16"><use href="#t-prev"/></svg></span>
            <span class="sep"></span>
            <span class="b"><svg class="i" viewBox="0 0 16 16"><use href="#t-copy"/></svg></span>
            <span class="b"><svg class="i" viewBox="0 0 16 16"><use href="#t-paste"/></svg></span>
            <span class="b"><svg class="i" viewBox="0 0 16 16"><use href="#t-paste"/></svg></span>
            <span class="sep"></span>
            <span class="b"><svg class="i" viewBox="0 0 16 16"><use href="#t-bucket"/></svg></span>
            <span class="sep"></span>
            <span class="b b-w"><svg class="i" viewBox="0 0 16 16"><use href="#t-undo"/></svg></span><span class="arr arr-off"></span>
            <span class="b"><svg class="i" viewBox="0 0 16 16"><use href="#t-redo"/></svg></span><span class="arr arr-off"></span>
            <span class="sep sep-w"></span>
            <span class="b"><svg class="i" viewBox="0 0 16 16"><use href="#t-fit"/></svg></span>
            <span class="b"><svg class="i" viewBox="0 0 16 16"><use href="#t-a"/></svg></span>
            <span class="b"><svg class="i" viewBox="0 0 16 16"><use href="#t-emb"/></svg></span>
            <span class="sep"></span>
            <span class="b"><svg class="i" viewBox="0 0 16 16"><use href="#t-grid"/></svg></span>
            <span class="b"><svg class="i" viewBox="0 0 16 16"><use href="#t-film"/></svg></span>
          </div>
          <div class="seg"><span class="grip"></span>
            <span class="b"><svg class="i" viewBox="0 0 16 16"><use href="#t-drop"/></svg></span>
          </div>
          <div class="seg"><span class="grip"></span>
            <span class="b"><svg class="i" viewBox="0 0 16 16"><use href="#t-pal"/></svg></span><span class="arr"></span>
          </div>
        </div>
        <div class="tb">
          <div class="seg seg-first"><span class="grip"></span>
            <span class="b"><svg class="i" viewBox="0 0 16 16"><use href="#t-crop"/></svg></span>
            <span class="b"><svg class="i" viewBox="0 0 16 16"><use href="#t-size"/></svg></span>
            <span class="sep"></span>
            <span class="b"><svg class="i" viewBox="0 0 16 16"><use href="#t-swh"/></svg></span>
            <span class="b"><svg class="i" viewBox="0 0 16 16"><use href="#t-swv"/></svg></span>
            <span class="b b-m3"><svg class="i" viewBox="0 0 16 16"><use href="#t-mir"/></svg></span>
            <span class="b"><svg class="i" viewBox="0 0 16 16"><use href="#t-frm"/></svg></span>
            <span class="sep sep-w"></span>
            <span class="b"><svg class="i" viewBox="0 0 16 16"><use href="#t-r1"/></svg></span>
            <span class="b"><svg class="i" viewBox="0 0 16 16"><use href="#t-r2"/></svg></span>
            <span class="b"><svg class="i" viewBox="0 0 16 16"><use href="#t-r3"/></svg></span>
          </div>
          <div class="seg"><span class="grip"></span>
            <span class="b"><svg class="i" viewBox="0 0 16 16"><use href="#t-shd"/></svg></span>
            <span class="b"><svg class="i" viewBox="0 0 16 16"><use href="#t-btn"/></svg></span>
            <span class="b"><svg class="i" viewBox="0 0 16 16"><use href="#t-sun"/></svg></span>
            <span class="b"><svg class="i" viewBox="0 0 16 16"><use href="#t-mos"/></svg></span>
            <span class="b"><svg class="i" viewBox="0 0 16 16"><use href="#t-wav"/></svg></span>
            <span class="b"><svg class="i" viewBox="0 0 16 16"><use href="#t-chk"/></svg></span>
            <span class="b"><svg class="i" viewBox="0 0 16 16"><use href="#t-brk"/></svg></span>
            <span class="b b-m2"><svg class="i" viewBox="0 0 16 16"><use href="#t-drk"/></svg></span>
            <span class="b b-m3"><svg class="i" viewBox="0 0 16 16"><use href="#t-tile"/></svg></span>
            <span class="b"><svg class="i" viewBox="0 0 16 16"><use href="#t-pen"/></svg></span>
            <span class="b"><svg class="i" viewBox="0 0 16 16"><use href="#t-cup"/></svg></span>
            <span class="b"><svg class="i" viewBox="0 0 16 16"><use href="#t-spi"/></svg></span>
          </div>
        </div>
        <div class="tb">
          <div class="seg seg-first"><span class="grip"></span>
            <span class="b"><svg class="i" viewBox="0 0 16 16"><use href="#t-g1"/></svg></span>
            <span class="b"><svg class="i" viewBox="0 0 16 16"><use href="#t-g2"/></svg></span>
            <span class="b"><svg class="i" viewBox="0 0 16 16"><use href="#t-g3"/></svg></span>
            <span class="sep"></span>
            <span class="b"><svg class="i" viewBox="0 0 16 16"><use href="#t-spk"/></svg></span>
            <span class="b"><svg class="i" viewBox="0 0 16 16"><use href="#t-bar"/></svg></span>
            <span class="b"><svg class="i" viewBox="0 0 16 16"><use href="#t-blu"/></svg></span>
            <span class="b"><svg class="i" viewBox="0 0 16 16"><use href="#t-pic"/></svg></span>
            <span class="b"><svg class="i" viewBox="0 0 16 16"><use href="#t-gam"/></svg></span>
            <span class="b"><svg class="i" viewBox="0 0 16 16"><use href="#t-whl"/></svg></span>
            <span class="b"><svg class="i" viewBox="0 0 16 16"><use href="#t-chx"/></svg></span>
            <span class="b"><svg class="i" viewBox="0 0 16 16"><use href="#t-rgb"/></svg></span>
            <span class="b"><svg class="i" viewBox="0 0 16 16"><use href="#t-xor"/></svg></span>
            <span class="b"><svg class="i" viewBox="0 0 16 16"><use href="#t-gbr"/></svg></span>
          </div>
          <div class="seg"><span class="grip"></span>
            <span class="b"><svg class="i" viewBox="0 0 16 16"><use href="#t-mag"/></svg></span><span class="arr arr-n"></span>
            <span class="b"><svg class="i" viewBox="0 0 16 16"><use href="#t-zi"/></svg></span>
            <span class="b"><svg class="i" viewBox="0 0 16 16"><use href="#t-zo"/></svg></span>
          </div>
        </div>
      </div>
      <div class="work"></div>
      <footer class="status">
        <span class="st st-main"></span>
        <span class="st st-a"></span>
        <span class="st st-b"><svg class="i" viewBox="0 0 16 16"><use href="#t-size"/></svg></span>
        <span class="st st-c"><svg class="i" viewBox="0 0 16 16"><use href="#t-mag"/></svg></span>
        <span class="st st-d"><svg class="i" viewBox="0 0 16 16"><use href="#t-pal"/></svg></span>
        <svg class="sizer" viewBox="0 0 11 11"><path fill="#aca899" d="M9 1h2v2H9zM5 5h2v2H5zM9 5h2v2H9zM1 9h2v2H1zM5 9h2v2H5zM9 9h2v2H9z"/></svg>
      </footer>
    </div>
  </section>
</div>

<footer class="taskbar">
  <div class="start"><svg class="flag" viewBox="0 0 20 20"><path fill="#e8502a" d="M3 2q3-1 6 0l-1 7q-3-1-6 0z"/><path fill="#7fc242" d="M10 2q3 1 6 0l1 7q-3 1-6 0z"/><path fill="#3c78d8" d="M2 10q3-1 6 0l-1 7q-3-1-6 0z"/><path fill="#f7c92c" d="M9 10q3 1 6 0l1 7q-3 1-6 0z"/></svg><span>スタート</span></div>
  <div class="ql">
    <svg class="i" viewBox="0 0 16 16"><use href="#q-clock"/></svg>
    <svg class="i" viewBox="0 0 16 16"><use href="#q-opera"/></svg>
    <svg class="i" viewBox="0 0 32 32"><use href="#b-ie"/></svg>
    <svg class="i" viewBox="0 0 32 32"><use href="#b-chrome"/></svg>
    <svg class="i" viewBox="0 0 16 16"><use href="#q-ff"/></svg>
    <svg class="i" viewBox="0 0 16 16"><use href="#q-saf"/></svg>
  </div>
  <div class="tasks">
    <span class="task"><svg class="i" viewBox="0 0 16 16"><use href="#q-mail"/></svg>syst...</span>
    <span class="task"><svg class="i" viewBox="0 0 32 32"><use href="#b-folder"/></svg>C:¥D...</span>
    <span class="task"><svg class="i" viewBox="0 0 16 16"><use href="#q-sheet"/></svg>SIC...</span>
    <span class="task"><svg class="i" viewBox="0 0 16 16"><use href="#q-cs"/></svg>SIC...</span>
    <span class="task"><svg class="i" viewBox="0 0 16 16"><use href="#ftp"/></svg>FFF...</span>
    <span class="task"><svg class="i" viewBox="0 0 32 32"><use href="#b-chrome"/></svg>英語...</span>
    <span class="task"><svg class="i" viewBox="0 0 16 16"><use href="#ftp"/></svg>192....</span>
    <span class="task"><svg class="i" viewBox="0 0 16 16"><use href="#ftp"/></svg>192....</span>
    <span class="task"><svg class="i" viewBox="0 0 32 32"><use href="#b-ie"/></svg>404 ...</span>
    <span class="task"><svg class="i" viewBox="0 0 16 16"><use href="#q-app"/></svg>SIC...</span>
    <span class="task task-on"><svg class="i" viewBox="0 0 16 16"><use href="#q-smile"/></svg>JTrim</span>
  </div>
  <div class="mic"><svg class="i" viewBox="0 0 16 16"><use href="#q-mic"/></svg></div>
  <div class="tray">
    <svg class="i" viewBox="0 0 16 16"><use href="#y-cam"/></svg>
    <svg class="i" viewBox="0 0 16 16"><use href="#y-col"/></svg>
    <svg class="i" viewBox="0 0 16 16"><use href="#y-java"/></svg>
    <svg class="i" viewBox="0 0 16 16"><use href="#y-n"/></svg>
    <svg class="i" viewBox="0 0 16 16"><use href="#y-wis"/></svg>
    <svg class="i" viewBox="0 0 16 16"><use href="#y-ball"/></svg>
    <svg class="i" viewBox="0 0 16 16"><use href="#y-m1"/></svg>
    <svg class="i" viewBox="0 0 16 16"><use href="#y-m2"/></svg>
    <svg class="i" viewBox="0 0 16 16"><use href="#y-bt"/></svg>
    <svg class="i" viewBox="0 0 16 16"><use href="#y-r1"/></svg>
    <svg class="i" viewBox="0 0 16 16"><use href="#y-r2"/></svg>
    <svg class="i" viewBox="0 0 16 16"><use href="#y-ph"/></svg>
    <svg class="i" viewBox="0 0 16 16"><use href="#y-sy"/></svg>
    <svg class="i" viewBox="0 0 16 16"><use href="#y-ac"/></svg>
    <svg class="i" viewBox="0 0 16 16"><use href="#y-mc"/></svg>
    <svg class="i" viewBox="0 0 16 16"><use href="#y-n1"/></svg>
    <svg class="i" viewBox="0 0 16 16"><use href="#y-n2"/></svg>
    <svg class="i" viewBox="0 0 16 16"><use href="#y-n3"/></svg>
    <svg class="i" viewBox="0 0 16 16"><use href="#y-sp"/></svg>
    <svg class="i" viewBox="0 0 16 16"><use href="#y-dc"/></svg>
    <svg class="i" viewBox="0 0 16 16"><use href="#y-gr"/></svg>
    <svg class="i tray-tv" viewBox="0 0 16 16"><use href="#y-tv"/></svg>
    <span class="clock">15:05</span>
  </div>
</footer>
</main>
</body>
</html>
```

FILE: styles.css
```css
* { box-sizing: border-box; }
html, body { margin: 0; padding: 0; }
body {
  width: 1600px;
  height: 1200px;
  overflow: hidden;
  font-family: "Liberation Sans", "Noto Sans CJK JP", sans-serif;
  font-size: 11.500px;
  font-feature-settings: "palt";
}
.defs { position: absolute; width: 0; height: 0; }
.sv-serif { font-family: "Liberation Serif", serif; font-weight: 700; }
.sv-serif-i { font-family: "Liberation Serif", serif; font-weight: 700; font-style: italic; }
.sv-sans { font-family: "Liberation Sans", sans-serif; }
svg { overflow: visible; flex: none; }
.i { width: 16px; height: 16px; display: block; }
.big { width: 32px; height: 32px; display: block; }

.desk { width: 1600px; height: 1200px; display: flex; flex-direction: column; }
.canvas {
  position: relative;
  flex: 1;
  overflow: hidden;
  background-color: #1a1a1a;
  background-image:
    radial-gradient(ellipse 12.500px 13.500px at 16px 48px, #000 97%, transparent 100%),
    radial-gradient(ellipse 12.500px 13.500px at 48px 16px, #000 97%, transparent 100%),
    radial-gradient(ellipse 12.500px 13.500px at 17px 49.500px, #565656 97%, transparent 100%),
    radial-gradient(ellipse 12.500px 13.500px at 49px 17.500px, #565656 97%, transparent 100%);
  background-size: 64px 64px;
}
.peek { position: absolute; top: -8px; width: 26px; height: 13px; border-radius: 50%; background: #d02020; }
.peek-a { left: 338px; }
.peek-b { left: 962px; }

/* fences */
.fence { position: absolute; background: rgba(0,178,122,.23); border: 1px solid #17664c; border-radius: 4px; }
.fence::before { content: ""; display: block; height: 27px; background: rgba(255,255,255,.035); }
.fence-tr { left: 1320px; top: 40px; width: 110px; height: 129px; }
.fence-l1 { left: 21px; top: 327px; width: 120px; height: 489px; }
.fence-l2 { left: 21px; top: 823px; width: 120px; height: 193px; }
.fence-br { left: 1340px; top: 753px; width: 238px; height: 394px; }

/* desktop icons */
.col { position: absolute; display: flex; flex-direction: column; }
.col-a { left: 0; top: 1px; }
.col-b { left: 75px; top: 1px; }
.col-tv { left: 0; top: 1051px; }
.col-tv2 { left: 75px; top: 1051px; }
.col-f1 { left: 22px; top: 360px; }
.col-f1b { left: 100px; top: 360px; }
.col-f2 { left: 22px; top: 856px; }
.col-f2b { left: 100px; top: 856px; }
.col-tr { left: 1344px; top: 73px; }
.col-r0 { left: 1305px; top: 785px; }
.col-r1 { left: 1383px; top: 785px; }
.col-r2 { left: 1461px; top: 785px; }
.ic { width: 76px; height: 75px; display: flex; flex-direction: column; align-items: center; }
.ic-empty { visibility: hidden; }
.gap32 { height: 32px; flex: none; }
.lb {
  margin-top: 5px;
  color: #fff;
  line-height: 12px;
  white-space: nowrap;
  text-align: center;
  text-shadow: 1px 1px 1px #000;
}

/* notes */
.title-note {
  position: absolute; left: 1361px; top: 5px; width: 219px; height: 18px;
  background: #fff; color: #000; padding-left: 7px; line-height: 18px;
  font-family: "Noto Sans CJK JP", sans-serif; font-size: 11.500px; letter-spacing: -1px;
  white-space: nowrap; overflow: hidden;
}
.title-note small { font-size: 10px; letter-spacing: -.6px; }
.note {
  position: absolute;
  background: #ffff80;
  color: #000;
  font-family: "Noto Sans CJK JP", sans-serif;
  font-feature-settings: "hwid";
  font-size: 13px;
  letter-spacing: .5px;
  line-height: 17px;
  white-space: pre;
  overflow: hidden;
  border: 1px solid #b4b4a0;
}
.note-are { left: 1350px; top: 438px; width: 164px; height: 21px; padding-left: 8px; }
.note-acc { left: 1356px; top: 353px; width: 250px; height: 93px; padding: 0 0 0 2px; }
.note-tbl { left: 1377px; top: 501px; width: 223px; height: 177px; padding-left: 1px; white-space: normal; }
.codes { border-collapse: collapse; width: 216px; }
.codes td { border: 1px solid #000; height: 19px; padding: 0 0 0 1px; line-height: 14px; vertical-align: top; letter-spacing: 1px; white-space: pre; }
.codes .c1 { width: 66px; }
.note-mid { left: 1420px; top: 658px; width: 171px; height: 76px; padding: 1px 0 0 33px; }
.note-tip { left: 1370px; top: 619px; width: 138px; height: 163px; padding: 0 0 0 3px; }

/* ATOK */
.atok {
  position: absolute; left: 1447px; top: 1147px; width: 153px; height: 23px;
  background: #ece9d8; display: flex; align-items: center;
  border: 1px solid #fff; border-right: 0; border-bottom: 0;
  color: #a5a294; font-size: 13px;
}
.atok-grip { margin: 0 6px 0 4px; }
.atok-name { background: #666; color: #ccc; width: 39px; height: 16px; line-height: 16px; text-align: center; margin-right: 6px; border: 1px solid #444; font-size: 11px; letter-spacing: 1px; }
.atok-ch { width: 16px; text-align: center; margin-right: 1px; font-size: 12px; }
.atok-r { margin-left: 6px; width: 10px; }
.atok-side { margin-left: auto; width: 15px; height: 22px; border-left: 1px solid #888; display: flex; flex-direction: column; align-items: center; color: #000; font-size: 8px; line-height: 11px; }
.atok-side b { height: 11px; display: block; }

/* window beneath */
.under { position: absolute; left: 154px; top: 1100px; width: 1198px; height: 70px; display: flex; background: #fff; }
.under-main { flex: 1; background: #fff; border-left: 5px solid #6c78cc; }
.under-cream { width: 18px; background: #fbfaf3; }
.under-line { width: 4px; background: #6c78cc; }
.under-right { width: 120px; background: #fff; }
.under-scroll { width: 18px; background: #c4d5fb; border-right: 2px solid #9aa; }

/* FFFTP window */
.ftp {
  position: absolute; left: 88px; top: 117px; width: 140px; height: 658px;
  display: flex; flex-direction: column;
  background: #7f97e6; padding: 0 0 4px 4px;
  border-radius: 6px 0 0 0;
}
.ftp-title { height: 20px; padding: 7px 0 0 4px; flex: none; }
.ftp-title .i { width: 13px; height: 15px; }
.ftp-menu { height: 29px; background: #ece9d8; color: #a5a294; font-size: 15px; line-height: 28px; padding-left: 7px; font-family: "Noto Sans CJK JP", sans-serif; border-bottom: 1px solid #aca899; flex: none; }
.ftp-bar { height: 28px; background: #ece9d8; border-bottom: 1px solid #aca899; flex: none; padding: 5px 0 0 11px; }
.ftp-heart { width: 10px; height: 14px; display: block; margin-left: 3px; }
.ftp-head { height: 23px; background: #ece9d8; border-left: 1px solid #888; margin-left: 1px; font-size: 14px; line-height: 24px; padding-left: 9px; color: #222; font-family: "Noto Sans CJK JP", sans-serif; flex: none; }
.ftp-list { height: 340px; background: #fff; padding: 2px 0 0 6px; border-left: 1px solid #888; margin-left: 1px; flex: none; display: flex; flex-direction: column; gap: 2px; overflow: hidden; }
.fd { width: 13px; height: 12px; display: block; }
.ftp-log {
  margin-top: 6px; height: 158px; flex: none;
  border: 1px solid #777; margin-left: 1px;
  background: #ece9d8; color: #111;
  font: 17px/18px "Liberation Sans", "Noto Sans CJK JP", sans-serif;
  padding: 0 0 0 3px; white-space: pre; overflow: hidden;
}
.ftp-status { flex: 1; background: #f1efe6; margin-top: 3px; }

/* JTrim window */
.jt {
  position: absolute; left: 112px; top: 5px; width: 1245px; height: 1110px;
  display: flex; flex-direction: column;
  background: #0435e8;
  padding: 0 5px 3px 4px;
  border-radius: 7px 7px 0 0;
}
.jt-title {
  height: 30px; margin: 0 -5px 0 -4px; padding: 2px 6px 0 6px; flex: none;
  display: flex; align-items: center;
  border-radius: 7px 7px 0 0;
  background: linear-gradient(180deg, #0a58e0 0, #3a8df8 3px, #0b5fe8 7px, #0050e4 14px, #0058ec 24px, #0a62f0 27px, #0343c8 30px);
}
.jt-title .i { width: 16px; height: 16px; }
.jt-name { margin-left: 4px; color: #fff; font: 700 13px/16px "Liberation Sans", sans-serif; letter-spacing: .6px; text-shadow: 1px 1px 1px #0a1f80; flex: 1; }
.wb { width: 21px; height: 21px; border: 1px solid #fff; border-radius: 3px; margin: -2px 0 0 2px; position: relative; background: radial-gradient(circle at 30% 30%, #5a90f5, #1f50d8 75%, #3a70e8); }
.wb-close { background: radial-gradient(circle at 30% 30%, #ec8a6a, #c94020 75%, #d85a38); }
.wb::after { content: ""; position: absolute; }
.wb-min::after { left: 4px; bottom: 4px; width: 7px; height: 3px; background: #fff; }
.wb-max::after { left: 4px; top: 4px; width: 12px; height: 12px; border: 1px solid #fff; border-top-width: 3px; }
.wb-close::before, .wb-close::after { content: ""; position: absolute; left: 9px; top: 3px; width: 2.500px; height: 14px; background: #fff; }
.wb-close::before { transform: rotate(45deg); }
.wb-close::after { transform: rotate(-45deg); }

.jt-client { flex: 1; min-height: 0; display: flex; flex-direction: column; background: #ece9d8; }
.menu { height: 21px; flex: none; display: flex; align-items: flex-start; padding: 2px 0 0 6px; border-bottom: 1px solid #fff; box-shadow: inset 0 -1px #aca899; font-family: "Noto Sans CJK JP", sans-serif; }
.mi { background: #fff; color: #000; line-height: 14px; font-size: 12px; white-space: nowrap; margin-right: 14px; }
.mi-k { letter-spacing: -1.100px; }
.mi u { text-underline-offset: 1px; }

.tbs { flex: none; display: flex; flex-direction: column; }
.tb { height: 27px; display: flex; align-items: stretch; }
.seg { display: flex; align-items: center; padding: 0 1px 0 3px; border-right: 1px solid #aca899; border-bottom: 1px solid #aca899; box-shadow: inset -1px 0 #fff; }
.seg-first { padding-left: 4px; }
.grip { width: 5px; height: 20px; margin-right: 3px; flex: none; border-left: 2px solid #aca899; border-right: 2px solid #aca899; background: #fff; }
.b { width: 23px; height: 22px; display: flex; align-items: center; justify-content: center; flex: none; }
.b-w { width: 27px; }
.b-m2 { margin-left: 2px; }
.b-m3 { margin-left: 3px; }
.sep { width: 5px; height: 22px; flex: none; position: relative; }
.sep::after { content: ""; position: absolute; left: 2px; top: 0; width: 2px; height: 22px; background: #aca899; border-right: 1px solid #fff; }
.sep-n { width: 4px; }
.sep-w { width: 6px; }
.arr { width: 10px; height: 22px; flex: none; position: relative; }
.arr::after { content: ""; position: absolute; left: 0; top: 10px; border: 4px solid transparent; border-top: 4px solid #000; border-bottom: 0; }
.arr-off::after { border-top-color: #aca899; }
.arr-n { width: 10px; }

.work { flex: 1; background: #aca899; border-left: 1px solid #85836f; border-top: 2px solid #85836f; border-bottom: 1px solid #fff; }
.status { height: 24px; flex: none; display: flex; align-items: center; position: relative; background: #ece9d8; }
.st { height: 22px; display: flex; align-items: center; padding-left: 2px; border-left: 1px solid #cfccbb; flex: none; }
.st-main { width: 921px; border-left: 0; }
.st-a { width: 85px; }
.st-b { width: 101px; }
.st-c { width: 64px; }
.st-d { width: 40px; padding-left: 3px; }
.sizer { position: absolute; right: 1px; bottom: 1px; width: 11px; height: 11px; }

/* taskbar */
.taskbar {
  height: 30px; flex: none; display: flex; align-items: center; position: relative;
  background: linear-gradient(180deg, #1f5fd4 0, #3a78e8 2px, #2563dc 5px, #245edb 24px, #1a4cc0 30px);
}
.start {
  width: 108px; height: 30px; flex: none; display: flex; align-items: center; padding-left: 10px;
  border-radius: 0 10px 10px 0;
  background: linear-gradient(180deg, #3d9a3d 0, #62b862 4px, #3c8f3c 10px, #338433 24px, #2a702a 30px);
  color: #fff; font-family: "Noto Sans CJK JP", sans-serif; font-weight: 700; font-style: italic; font-size: 14.500px;
  text-shadow: 1px 1px 1px #1a4a1a;
}
.flag { width: 20px; height: 20px; margin-right: 6px; }
.ql { width: 173px; flex: none; display: flex; gap: 7px; padding-left: 14px; align-items: center; }
.tasks { display: flex; gap: 2px; flex: none; }
.task {
  width: 72px; height: 24px; display: flex; align-items: center; gap: 3px; padding-left: 9px;
  background: linear-gradient(180deg, #4f8df0, #3c81f3 40%, #3a78ea);
  border-radius: 2px; color: #fff; font-size: 11.500px; white-space: nowrap;
  box-shadow: inset 0 0 0 1px #2f68d8;
}
.task-on { width: 75px; background: #1e52b7; box-shadow: inset 1px 1px 2px #123a90; }
.mic { width: 36px; flex: none; display: flex; justify-content: center; }
.tray {
  flex: 1; height: 30px; display: flex; align-items: center; gap: 2px; padding-left: 10px;
  background: linear-gradient(180deg, #0c7fe0 0, #1a9bf0 3px, #118fe8 8px, #118be6 24px, #0c6fd0 30px);
  border-left: 1px solid #0a3aa0;
}
.tray-tv { margin-left: 17px; }
.clock { color: #fff; margin-left: 9px; font-size: 12px; }
```
